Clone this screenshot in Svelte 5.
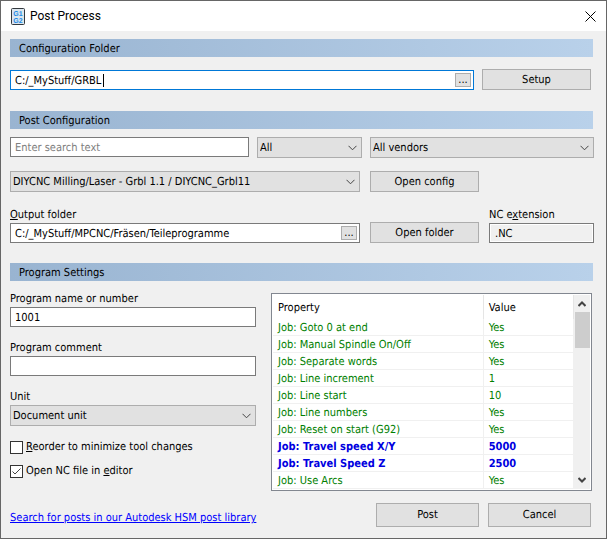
<script lang="ts">
	let configFolder = $state('C:/_MyStuff/GRBL');
	let search = $state('');
	let outputFolder = $state('C:/_MyStuff/MPCNC/Fräsen/Teileprogramme');
	let extension = $state('.NC');
	let programName = $state('1001');
	let programComment = $state('');
	let reorder = $state(false);
	let openInEditor = $state(true);

	const properties = [
		{ name: 'Job: Goto 0 at end', value: 'Yes' },
		{ name: 'Job: Manual Spindle On/Off', value: 'Yes' },
		{ name: 'Job: Separate words', value: 'Yes' },
		{ name: 'Job: Line increment', value: '1' },
		{ name: 'Job: Line start', value: '10' },
		{ name: 'Job: Line numbers', value: 'Yes' },
		{ name: 'Job: Reset on start (G92)', value: 'Yes' },
		{ name: 'Job: Travel speed X/Y', value: '5000', changed: true },
		{ name: 'Job: Travel Speed Z', value: '2500', changed: true },
		{ name: 'Job: Use Arcs', value: 'Yes' }
	];
</script>

{#snippet dropdown(id: string, label: string, option: string)}
	<div class="dropdown">
		<select {id} aria-label={label}>
			<option>{option}</option>
		</select>
		<svg class="arrow" width="9" height="6" viewBox="0 0 9 6">
			<path d="M0.5 0.8 4.5 4.8 8.5 0.8" />
		</svg>
	</div>
{/snippet}

<div class="dialog">
	<header>
		<svg class="logo" width="14" height="17" viewBox="0 0 14 17">
			<rect x="0.5" y="0.5" width="13" height="16" rx="1" fill="#dce6ee" stroke="#33383d" />
			<text x="7" y="8">G1</text>
			<text x="7" y="15">G2</text>
		</svg>
		<h1>Post Process</h1>
		<button class="close" aria-label="Close">
			<svg width="11" height="11" viewBox="0 0 11 11">
				<path d="M0.5 0.5 10.5 10.5M10.5 0.5 0.5 10.5" />
			</svg>
		</button>
	</header>

	<main>
		<h2>Configuration Folder</h2>
		<div class="config">
			<div class="field focused">
				<input type="text" aria-label="Configuration folder" bind:value={configFolder} />
				<span class="caret"></span>
				<button class="browse" aria-label="Browse">...</button>
			</div>
			<button>Setup</button>
		</div>

		<h2>Post Configuration</h2>
		<div class="filters">
			<div class="field">
				<input type="text" aria-label="Search" placeholder="Enter search text" bind:value={search} />
			</div>
			{@render dropdown('type', 'Type', 'All')}
			{@render dropdown('vendor', 'Vendor', 'All vendors')}
		</div>
		<div class="columns post">
			{@render dropdown('post', 'Post', 'DIYCNC Milling/Laser - Grbl 1.1 / DIYCNC_Grbl11')}
			<button>Open config</button>
		</div>
		<div class="columns output">
			<div>
				<label for="output"><u>O</u>utput folder</label>
				<div class="field">
					<input id="output" type="text" bind:value={outputFolder} />
					<button class="browse" aria-label="Browse">...</button>
				</div>
			</div>
			<button>Open folder</button>
			<div>
				<label for="extension">NC e<u>x</u>tension</label>
				<div class="field readonly">
					<input id="extension" type="text" readonly bind:value={extension} />
				</div>
			</div>
		</div>

		<h2>Program Settings</h2>
		<div class="program">
			<div class="settings">
				<label for="name">Program name or number</label>
				<div class="field">
					<input id="name" type="text" bind:value={programName} />
				</div>
				<label for="comment">Program comment</label>
				<div class="field">
					<input id="comment" type="text" bind:value={programComment} />
				</div>
				<label for="unit">Unit</label>
				{@render dropdown('unit', 'Unit', 'Document unit')}
				<label class="check">
					<input type="checkbox" bind:checked={reorder} />
					<span><u>R</u>eorder to minimize tool changes</span>
				</label>
				<label class="check">
					<input type="checkbox" bind:checked={openInEditor} />
					{#if openInEditor}
						<svg class="tick" width="13" height="13" viewBox="0 0 13 13">
							<path d="M2.5 6.5 5 9 10.5 3.5" />
						</svg>
					{/if}
					<span>Open NC file in <u>e</u>ditor</span>
				</label>
			</div>

			<div class="list">
				<table>
					<thead>
						<tr><th>Property</th><th>Value</th></tr>
					</thead>
					<tbody>
						{#each properties as property}
							<tr class:changed={property.changed}>
								<td>{property.name}</td>
								<td>{property.value}</td>
							</tr>
						{/each}
					</tbody>
				</table>
				<div class="scrollbar">
					<svg width="8" height="6" viewBox="0 0 8 6"><path d="M0.5 5 4 1.5 7.5 5" /></svg>
					<div class="thumb"></div>
					<svg width="8" height="6" viewBox="0 0 8 6"><path d="M0.5 1 4 4.5 7.5 1" /></svg>
				</div>
			</div>
		</div>

		<footer>
			<a href="#library">Search for posts in our Autodesk HSM post library</a>
			<button>Post</button>
			<button>Cancel</button>
		</footer>
	</main>
</div>

<style>
	:global(body) {
		margin: 0;
		background: #f0f0f0;
	}
	.dialog {
		box-sizing: border-box;
		border: 1px solid #666;
		background: #f0f0f0;
		color: #000;
		font: 11px/14px 'DejaVu Sans Condensed', 'DejaVu Sans', sans-serif;
		text-rendering: geometricPrecision;
	}
	.dialog * {
		box-sizing: border-box;
	}
	header {
		display: flex;
		align-items: center;
		height: 30px;
		padding: 0 9px 0 10px;
		background: #fff;
	}
	.logo text {
		fill: #1e8be6;
		font: bold 7px/7px 'Liberation Sans', sans-serif;
		text-anchor: middle;
	}
	h1 {
		flex: 1;
		margin: 0 0 0 5px;
		font: 12px/16px Roboto, sans-serif;
		text-rendering: auto;
	}
	path {
		fill: none;
		stroke: #444;
	}
	main {
		padding: 8px 12px 11px 9px;
	}
	h2 {
		height: 18px;
		margin: 0 1px 0 0;
		padding: 1px 0 0 9px;
		background: linear-gradient(to right, #99b4d1, #b9d1ea);
		font: inherit;
		line-height: 18px;
	}
	label {
		display: block;
		height: 16px;
		line-height: 16px;
	}
	button {
		height: 21px;
		padding: 0;
		border: 1px solid #adadad;
		background: #e1e1e1;
		color: inherit;
		font: inherit;
		text-rendering: inherit;
	}
	.close {
		display: flex;
		align-items: center;
		justify-content: center;
		width: 13px;
		border: none;
		background: none;
	}
	.close path {
		stroke: #000;
	}
	.field {
		position: relative;
		display: flex;
		align-items: center;
		height: 20px;
		padding-right: 2px;
		border: 1px solid #7a7a7a;
		background: #fff;
	}
	.focused {
		border-color: #0078d7;
	}
	.field input {
		flex: 1;
		min-width: 0;
		height: 100%;
		padding: 0 4px;
		border: none;
		outline: none;
		background: none;
		color: inherit;
		font: inherit;
		text-rendering: inherit;
	}
	.field input::placeholder {
		color: #808080;
	}
	.readonly {
		padding: 1px;
	}
	.readonly input {
		background: #f0f0f0;
	}
	.caret {
		position: absolute;
		top: 3px;
		left: 92px;
		width: 1px;
		height: 13px;
		background: #000;
	}
	.browse {
		width: 16px;
		height: 14px;
		line-height: 10px;
	}
	.dropdown {
		position: relative;
		height: 21px;
	}
	select {
		width: 100%;
		height: 100%;
		padding: 0 20px 0 2px;
		border: 1px solid #adadad;
		border-radius: 0;
		outline: none;
		appearance: none;
		background: #e1e1e1;
		color: inherit;
		font: inherit;
		text-rendering: inherit;
	}
	.arrow {
		position: absolute;
		top: 8px;
		right: 5px;
		pointer-events: none;
	}
	.config {
		display: grid;
		grid-template-columns: 1fr 109px;
		align-items: end;
		gap: 8px;
		margin: 12px 3px 21px 0;
	}
	.filters {
		display: grid;
		grid-template-columns: 239px 105px 1fr;
		gap: 8px;
		margin-top: 8px;
	}
	.columns {
		display: grid;
		grid-template-columns: 1fr 109px 105px;
		align-items: end;
		gap: 10px;
	}
	.post {
		margin-top: 13px;
	}
	.output {
		margin: 15px 0 20px;
	}
	.program {
		display: grid;
		grid-template-columns: 246px 1fr;
		gap: 15px;
		margin: 10px 2px 12px 0;
	}
	.settings .field {
		margin-bottom: 13px;
	}
	.settings .dropdown {
		margin-bottom: 14px;
	}
	.check {
		position: relative;
		display: flex;
		align-items: center;
		gap: 3px;
		height: 14px;
		margin-bottom: 10px;
	}
	.check input {
		width: 13px;
		height: 13px;
		margin: 0;
		border: 1px solid #333;
		appearance: none;
		background: #fff;
	}
	.tick {
		position: absolute;
		left: 0;
	}
	.list {
		display: flex;
		align-self: start;
		margin-top: 2px;
		padding: 1px;
		border: 1px solid #828790;
		background: #fff;
	}
	table {
		flex: 1;
		border-spacing: 0;
		table-layout: fixed;
	}
	th,
	td {
		height: 17px;
		padding: 2px 5px 0;
		border: solid #f0f0f0;
		border-width: 0 1px 1px 0;
		text-align: left;
		line-height: 14px;
		white-space: nowrap;
	}
	th {
		height: 24px;
		border-color: #e5e5e5;
		border-bottom: none;
		font-weight: normal;
	}
	th:first-child {
		width: 70%;
	}
	td {
		color: #008000;
	}
	.changed td {
		color: #0000e0;
		font-weight: bold;
	}
	.scrollbar {
		display: flex;
		flex-direction: column;
		align-items: center;
		width: 16px;
		padding: 6px 0;
		background: #f0f0f0;
	}
	.scrollbar path {
		stroke-width: 2;
	}
	.thumb {
		width: 15px;
		height: 36px;
		margin: 5px 0 auto;
		background: #cdcdcd;
	}
	footer {
		display: flex;
		align-items: center;
		gap: 9px;
		padding-right: 3px;
	}
	footer button {
		width: 103px;
		height: 24px;
	}
	a {
		margin: 6px auto 0 0;
		color: #0000ff;
	}
</style>
